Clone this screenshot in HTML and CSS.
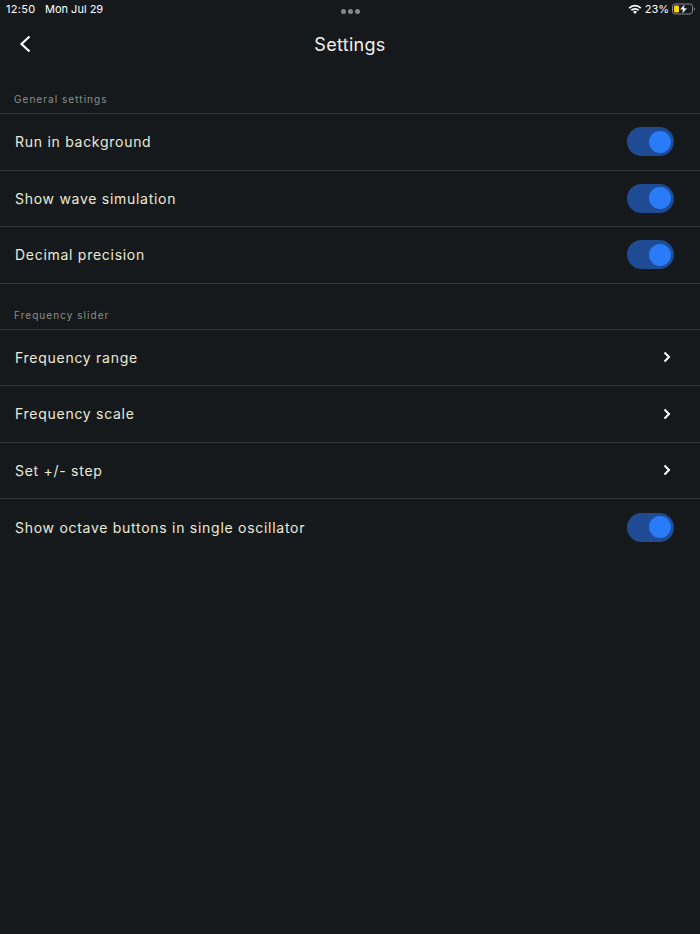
FILE: index.html
```html
<!DOCTYPE html>
<html lang="en">
<head>
  <meta charset="UTF-8" />
  <title>Settings</title>
  <link rel="stylesheet" href="styles.css">
</head>
<body>
  <!-- Status bar -->
  <div class="status-bar">
    <div class="status-left">
      <span class="time">12:50</span>
      <span>Mon Jul 29</span>
    </div>
    <div class="status-dots">
      <span class="dot"></span>
      <span class="dot"></span>
      <span class="dot"></span>
    </div>
    <div class="status-right">
      <svg class="wifi" width="14" height="10" viewBox="0 0 14 10">
        <path d="M0.6 3.4 A9.2 9.2 0 0 1 13.4 3.4 L12.2 4.7 A7.5 7.5 0 0 0 1.8 4.7 Z" fill="#fff"/>
        <path d="M2.8 5.6 A6 6 0 0 1 11.2 5.6 L10 6.9 A4.2 4.2 0 0 0 4 6.9 Z" fill="#fff"/>
        <path d="M5 7.8 A2.9 2.9 0 0 1 9 7.8 L7 10 Z" fill="#fff"/>
      </svg>
      <span>23%</span>
      <svg class="battery" width="24" height="12" viewBox="0 0 24 12">
        <rect x="0.5" y="1" width="20" height="10" rx="2.6" fill="none" stroke="#8c8e90"/>
        <rect x="2" y="2.5" width="5" height="7" rx="1" fill="#fdd60a"/>
        <path d="M22 4.3 a2 2 0 0 1 0 3.4 Z" fill="#8c8e90"/>
        <path d="M13.2 0.2 L7.6 6.8 H10.8 L9.6 11.8 L15.4 5 H12 Z" fill="#fff" stroke="#15191c" stroke-width="0.6"/>
      </svg>
    </div>
  </div>

  <!-- Header -->
  <div class="header">
    <svg class="back" width="12" height="18" viewBox="0 0 12 18">
      <path d="M10.5 1.5 L2.5 9 L10.5 16.5" fill="none" stroke="#fff" stroke-width="2.2"/>
    </svg>
    <h1 class="page-title">Settings</h1>
  </div>

  <!-- General settings -->
  <div class="section-title first">General settings</div>
  <div class="list">
    <div class="row">
      <span class="row-label">Run in background</span>
      <div class="switch"><span class="knob"></span></div>
    </div>
    <div class="row">
      <span class="row-label">Show wave simulation</span>
      <div class="switch"><span class="knob"></span></div>
    </div>
    <div class="row">
      <span class="row-label">Decimal precision</span>
      <div class="switch"><span class="knob"></span></div>
    </div>
  </div>

  <!-- Frequency slider -->
  <div class="section-title">Frequency slider</div>
  <div class="list">
    <div class="row">
      <span class="row-label">Frequency range</span>
      <svg class="chevron" width="8" height="12" viewBox="0 0 8 12">
        <path d="M1.5 1.5 L6 6 L1.5 10.5" fill="none" stroke="#fff" stroke-width="2"/>
      </svg>
    </div>
    <div class="row">
      <span class="row-label">Frequency scale</span>
      <svg class="chevron" width="8" height="12" viewBox="0 0 8 12">
        <path d="M1.5 1.5 L6 6 L1.5 10.5" fill="none" stroke="#fff" stroke-width="2"/>
      </svg>
    </div>
    <div class="row">
      <span class="row-label">Set +/- step</span>
      <svg class="chevron" width="8" height="12" viewBox="0 0 8 12">
        <path d="M1.5 1.5 L6 6 L1.5 10.5" fill="none" stroke="#fff" stroke-width="2"/>
      </svg>
    </div>
    <div class="row no-border">
      <span class="row-label">Show octave buttons in single oscillator</span>
      <div class="switch"><span class="knob"></span></div>
    </div>
  </div>
</body>
</html>
```
FILE: styles.css
```css
* {
  margin: 0;
  padding: 0;
  box-sizing: border-box;
  font-family: Inter, 'Liberation Sans', sans-serif;
}

html, body {
  width: 700px;
  height: 934px;
  background: #15191c;
  overflow: hidden;
}

.status-bar {
  height: 18px;
  display: grid;
  grid-template-columns: 1fr auto 1fr;
  align-items: center;
  padding: 0 6px;
  color: #fff;
  font-size: 11px;
}

.status-left {
  display: flex;
  gap: 9.5px;
}

.time {
  letter-spacing: 0.3px;
}

.status-dots {
  display: flex;
  gap: 2px;
  margin-top: 5px;
}

.dot {
  width: 5px;
  height: 5px;
  border-radius: 50%;
  background: #85888b;
}

.status-right {
  display: flex;
  align-items: center;
  justify-content: flex-end;
  gap: 3px;
  margin-right: -2px;
}

.header {
  height: 52px;
  display: flex;
  align-items: center;
  justify-content: center;
  position: relative;
}

.back {
  position: absolute;
  left: 19px;
  top: 17px;
}

.page-title {
  font-size: 18px;
  font-weight: 400;
  color: #f2f2ee;
  letter-spacing: 0.3px;
}

.section-title {
  padding: 24px 14px 6px;
  height: 45px;
  font-size: 10px;
  line-height: 15px;
  letter-spacing: 1.05px;
  color: #8d8f88;
}

.section-title.first {
  height: 43px;
  padding-top: 22px;
}

.list {
  border-top: 1px solid #34373a;
}

.row {
  height: 56.5px;
  display: flex;
  align-items: center;
  justify-content: space-between;
  padding: 0 26px 0 15px;
  border-bottom: 1px solid #34373a;
}

.row.no-border {
  border-bottom: none;
}

.row-label {
  font-size: 14px;
  letter-spacing: 0.72px;
  color: #ebead6;
}

.switch {
  width: 47px;
  height: 29px;
  border-radius: 15px;
  background: #1f4b94;
  display: flex;
  align-items: center;
  justify-content: flex-end;
  padding-right: 3px;
}

.knob {
  width: 22px;
  height: 22px;
  border-radius: 50%;
  background: #2a7bfa;
}

.chevron {
  margin-right: 3px;
}
```
